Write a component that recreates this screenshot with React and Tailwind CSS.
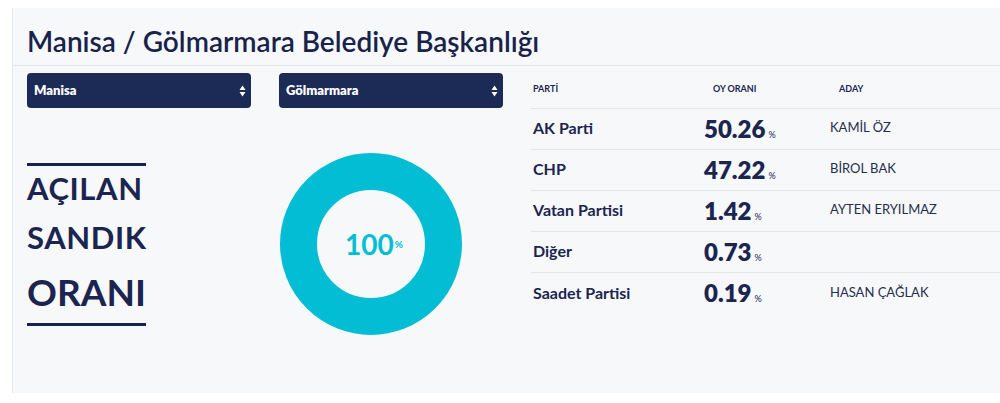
import React from "react";

const rows = [
  { p: "AK Parti", v: "50.26", a: "KAMİL ÖZ" },
  { p: "CHP", v: "47.22", a: "BİROL BAK" },
  { p: "Vatan Partisi", v: "1.42", a: "AYTEN ERYILMAZ" },
  { p: "Diğer", v: "0.73", a: "" },
  { p: "Saadet Partisi", v: "0.19", a: "HASAN ÇAĞLAK" },
];

function Arrows() {
  return (
    <svg width="7" height="12" viewBox="0 0 7 12" className="shrink-0">
      <path d="M3.5 0.5 L6.5 5 L0.5 5 Z" fill="#ffffff" />
      <path d="M3.5 11.5 L6.5 7 L0.5 7 Z" fill="#ffffff" />
    </svg>
  );
}

function Select({ label }) {
  return (
    <div className="w-[224px] h-[35px] rounded-[4px] bg-[#1c2a56] flex items-center justify-between pl-[7px] pr-[5px]">
      <span className="text-white text-[13px] font-extrabold">{label}</span>
      <Arrows />
    </div>
  );
}

export default function App() {
  return (
    <div className="w-[1000px] h-[403px] bg-white pt-2 pl-3 font-['Lato',sans-serif] text-[#1b2550]">
      <div className="h-[385px] border-l border-[#e4e6ea] bg-[#f7f8fa]">
        <div className="h-[58px] border-b border-[#e3e5e9] pl-[14px] pt-[16px]">
          <h1 className="text-[28px] leading-[34px] font-semibold text-[#18224a]">
            Manisa / Gölmarmara Belediye Başkanlığı
          </h1>
        </div>
        <div className="flex">
          <div className="w-[518px] pl-[14px] pt-[7px]">
            <div className="flex gap-[28px]">
              <Select label="Manisa" />
              <Select label="Gölmarmara" />
            </div>
            <div className="flex items-start mt-[45px]">
              <div className="w-[253px] mt-[10px]">
                <div className="w-[119px] h-[3px] bg-[#18224a]" />
                <div className="text-[31px] leading-[44px] font-bold tracking-[0.6px]">AÇILAN</div>
                <div className="text-[31px] leading-[54px] font-bold tracking-[0.6px]">SANDIK</div>
                <div className="text-[37px] leading-[55px] font-bold">ORANI</div>
                <div className="w-[119px] h-[3px] bg-[#18224a] mt-[4px]" />
              </div>
              <div className="w-[182px] h-[182px] rounded-full border-[37px] border-[#02bdd4] flex items-center justify-center pl-[6px]">
                <span className="text-[#02bdd4] text-[28px] font-bold leading-none">100</span>
                <span className="text-[#02bdd4] text-[10px] font-bold self-end mb-[46px] ml-[1px]">%</span>
              </div>
            </div>
          </div>
          <div className="flex-1">
            <div className="grid grid-cols-[173px_126px_1fr] h-[43px] border-b border-[#e3e5e9] items-center pt-[4px] text-[9px] font-bold">
              <div className="pl-[2px]">PARTİ</div>
              <div className="pl-[9px]">OY ORANI</div>
              <div className="pl-[9px]">ADAY</div>
            </div>
            {rows.map((r, i) => (
              <div
                key={r.p}
                className={
                  i < rows.length - 1
                    ? "grid grid-cols-[173px_126px_1fr] h-[41px] border-b border-[#e3e5e9] items-center"
                    : "grid grid-cols-[173px_126px_1fr] h-[41px] items-center"
                }
              >
                <div className="pl-[2px] text-[16px] font-bold pb-[2px]">{r.p}</div>
                <div className="flex items-baseline">
                  <span className="text-[24px] font-extrabold leading-none">{r.v}</span>
                  <span className="text-[9px] ml-[3px]">%</span>
                </div>
                <div className="text-[13px] text-[#262e4c] font-normal pb-[2px]">{r.a}</div>
              </div>
            ))}
          </div>
        </div>
      </div>
    </div>
  );
}
